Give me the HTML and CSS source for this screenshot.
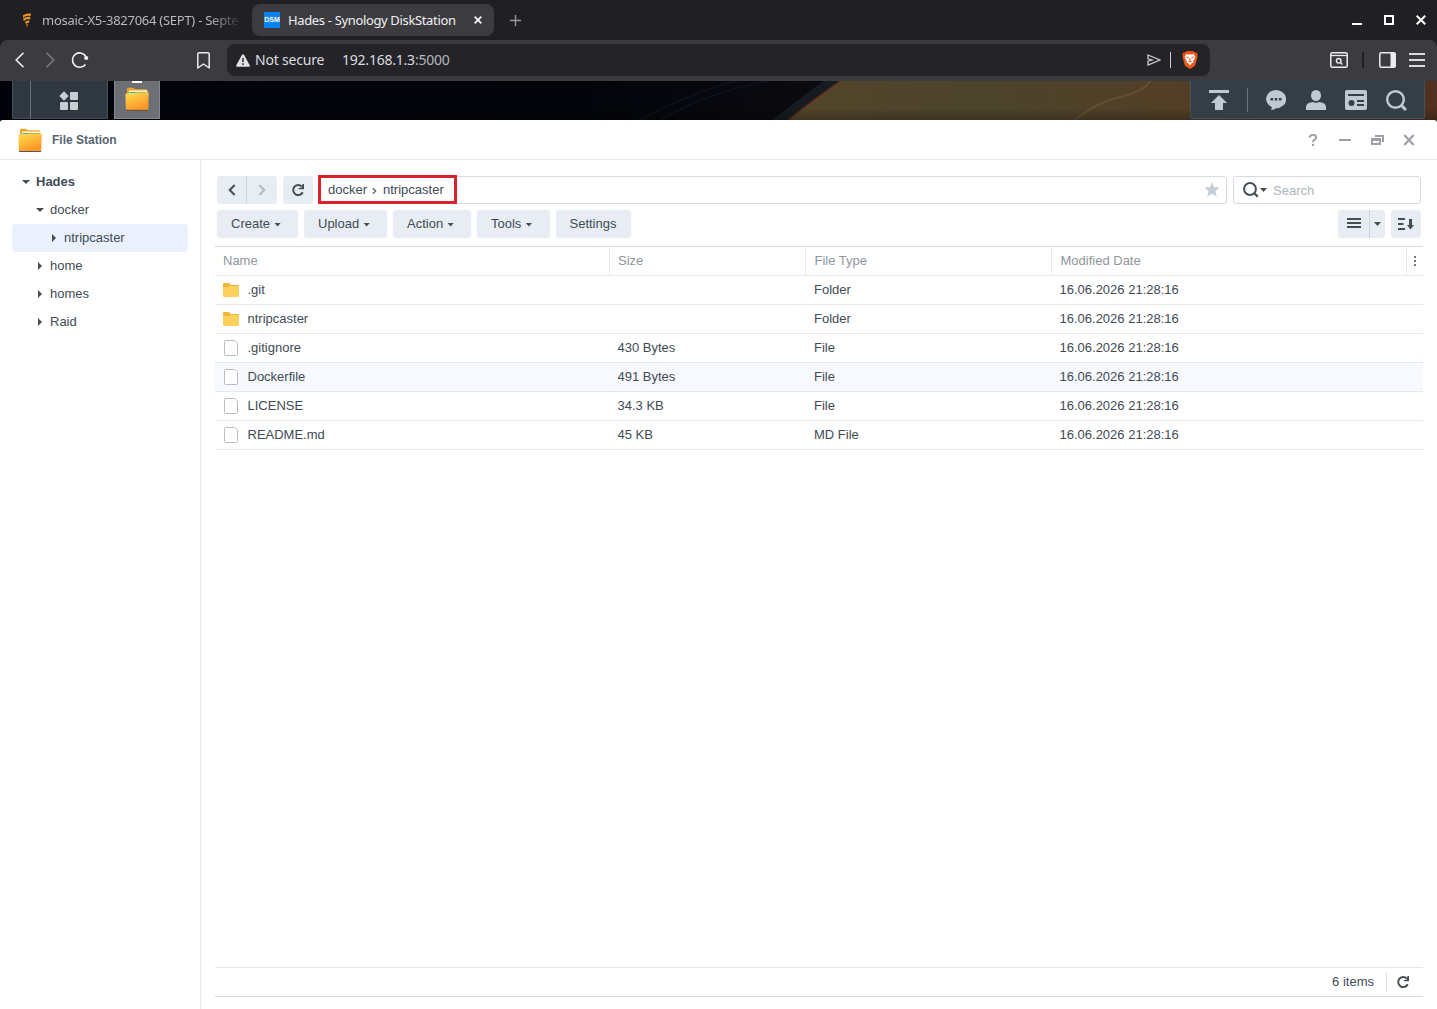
FILE: index.html
```html
<!DOCTYPE html>
<html lang="en">
<head>
<meta charset="utf-8">
<title>Hades - Synology DiskStation</title>
<link rel="stylesheet" href="styles.css">
</head>
<body>
<svg class="defs" width="0" height="0" aria-hidden="true">
  <defs>
    <linearGradient id="gold" x1="0" y1="0" x2="0.5" y2="1"><stop offset="0" stop-color="#ffe04f"/><stop offset="1" stop-color="#fd9527"/></linearGradient>
    <symbol id="app-folder" viewBox="0 0 24 24">
      <path d="M2 8V2.2Q2 .8 3.2.8H8l2 1.400h12v8H2z" fill="#efa52b"/>
      <path d="M4 3.5h18.5V9H4z" fill="#fff5c9"/><path d="M4.5 5h17v1.2h-17z" fill="#48aa8d"/>
      <path d="M1 22.5h22V24H1z" fill="#695345"/>
      <path d="M.5 7.3q0-.8.8-.8h7.2l1.7-1h12.5q1 0 1 1l-.4 15.3q0 1-1 1H1.8q-1 0-1-1z" fill="url(#gold)"/>
    </symbol>
    <symbol id="folder" viewBox="0 0 16 14"><path d="M0 1q0-1 1-1h5l2 2h8v5H0z" fill="#f3b63c"/><path d="M0 4h6l1.5-1H16v10q0 1-1 1H1q-1 0-1-1z" fill="#ffd05c"/></symbol>
    <symbol id="file" viewBox="0 0 14 16"><path d="M1.500.5h8.700q.6 0 1 .4l1.900 1.900q.4.400.4 1v10.700q0 1-1 1h-11q-1 0-1-1v-13q0-1 1-1z" fill="#fff" stroke="#b9bcc0"/></symbol>
    <symbol id="reload" viewBox="0 0 14 14"><path d="M11.700 9.200A5 5 0 1 1 10.700 3.500" fill="none" stroke="#464e55" stroke-width="2"/><path d="M13 1v5.200H7.800V5l2.700-.3L11.500 1z" fill="#464e55"/></symbol>
  </defs>
</svg>

<header class="tabs">
  <div class="tab tab-idle">
    <svg class="fav" width="10" height="14" viewBox="0 0 10 14"><path d="M1 2.200Q4 0 9 .5L8.600 3Q4 2 1 5zM1 6q3-2.800 7.500-2L8 6.500Q5 5 2 8zM3 9q2-2 4.500-1.500L6.800 10Q5 9.500 4 11zM4 11.700l2-.8L5 14z" fill="#ee9622"/></svg>
    <span class="tab-label">mosaic-X5-3827064 (SEPT) - Septe</span>
  </div>
  <div class="tab tab-active">
    <span class="dsm">DSM</span>
    <span class="tab-label">Hades - Synology DiskStation</span>
    <svg class="tab-close" width="8" height="8" viewBox="0 0 8 8"><path d="M.7.7l6.600 6.600M7.300.7L.7 7.300" stroke="#f5f5f5" stroke-width="1.800"/></svg>
  </div>
  <svg class="plus" width="11" height="11" viewBox="0 0 11 11"><path d="M5.500 0v11M0 5.500h11" stroke="#9a9a9d" stroke-width="1.400"/></svg>
  <div class="win-buttons">
    <svg width="10" height="12" viewBox="0 0 10 12"><path d="M0 10h10" stroke="#fff" stroke-width="2"/></svg>
    <svg width="10" height="12" viewBox="0 0 10 12"><path d="M1 2h8v8H1z" fill="none" stroke="#fff" stroke-width="2"/></svg>
    <svg width="10" height="12" viewBox="0 0 10 12"><path d="M.7 1.700l8.600 8.600M9.300 1.700L.7 10.300" stroke="#fff" stroke-width="2"/></svg>
  </div>
</header>

<nav class="browser-bar">
  <svg class="b-back" width="10" height="16" viewBox="0 0 10 16"><path d="M8.500.8L1.200 8l7.300 7.200" fill="none" stroke="#f1f1f3" stroke-width="1.600"/></svg>
  <svg class="b-fwd" width="10" height="16" viewBox="0 0 10 16"><path d="M1.500.8L8.800 8l-7.300 7.200" fill="none" stroke="#7f7f84" stroke-width="1.400"/></svg>
  <svg class="b-reload" width="18" height="18" viewBox="0 0 18 18"><path d="M14.500 13.400A7.200 7.200 0 1 1 15.200 6" fill="none" stroke="#f1f1f3" stroke-width="1.600"/><circle cx="15.200" cy="7" r="2.100" fill="#f1f1f3"/></svg>
  <svg class="b-mark" width="13" height="17" viewBox="0 0 13 17"><path d="M.8 16V2Q.8.8 2 .8h9Q12.200.8 12.200 2v14l-5.700-4z" fill="none" stroke="#ececef" stroke-width="1.500" stroke-linejoin="round"/></svg>
  <div class="address">
    <svg width="14" height="13" viewBox="0 0 14 13"><path d="M6 .8q1-1.300 2 0l5.700 10.500q.5 1.200-.8 1.400H1.100Q-.2 12.500.3 11.300z" fill="#e2e2e5"/><path d="M7 4v4M7 9.300v1.700" stroke="#29292d" stroke-width="1.500"/></svg>
    <span class="insecure">Not secure</span>
    <span class="url">192.168.1.3<span class="port">:5000</span></span>
    <svg class="send" width="14" height="12" viewBox="0 0 14 12"><path d="M1 1l12 5L1 11V7.200L5 6 1 4.800z" fill="none" stroke="#d0d0d4" stroke-width="1.300"/></svg>
    <i class="addr-sep"></i>
    <svg width="16" height="18" viewBox="0 0 16 18"><path d="M4.500 0h7l1.400 1.500 1.500-.1 1.300 2-.5 1.300.3 1-2 7.800q-.3 1.200-1.500 2L8 18l-4-2.500q-1.200-.8-1.500-2L.5 5.700l.3-1-.5-1.300 1.300-2 1.500.1z" fill="#ec5518"/><path d="M4.500 3l2 .5h3l2-.5 1.800 2.400-.6 2.500-1.700 2 .7 1.600-2 .7L8 14.500 6.300 12.200l-2-.7.7-1.600-1.700-2-.6-2.500z" fill="#fff"/><path d="M4.200 6l2.400.7M11.800 6l-2.400.7M8 7v3M6.300 10.700h3.400" stroke="#ec5518" stroke-width="1"/></svg>
  </div>
  <div class="b-right">
    <svg width="18" height="16" viewBox="0 0 18 16"><rect x=".8" y=".8" width="16.400" height="14.400" rx="1.500" fill="none" stroke="#ececef" stroke-width="1.500"/><path d="M1 3.500h16" stroke="#ececef" stroke-width="1.300"/><circle cx="8.700" cy="8.800" r="2.300" fill="none" stroke="#ececef" stroke-width="1.400"/><path d="M10.400 10.500l2 2" stroke="#ececef" stroke-width="1.400"/></svg>
    <i class="b-sep"></i>
    <svg width="17" height="16" viewBox="0 0 17 16"><rect x=".8" y=".8" width="15.400" height="14.400" rx="1.500" fill="none" stroke="#ececef" stroke-width="1.500"/><path d="M11.500 1h5v14h-5z" fill="#ececef"/></svg>
    <svg width="16" height="14" viewBox="0 0 16 14"><path d="M0 1h16M0 7h16M0 13h16" stroke="#dcdcdf" stroke-width="1.800"/></svg>
  </div>
</nav>

<div class="taskbar">
  <svg class="wallpaper" width="1437" height="39" viewBox="0 0 1437 39">
    <defs>
      <linearGradient id="night"><stop offset="0" stop-color="#02030a"/><stop offset=".7" stop-color="#03050b"/><stop offset="1" stop-color="#0b0b10"/></linearGradient>
      <linearGradient id="sand"><stop offset="0" stop-color="#53452a"/><stop offset=".3" stop-color="#4c442b"/><stop offset=".6" stop-color="#523f26"/><stop offset="1" stop-color="#51301e"/></linearGradient>
      <linearGradient id="shade" x2="0" y2="1"><stop offset="0" stop-color="#000" stop-opacity="0"/><stop offset=".7" stop-color="#000" stop-opacity="0"/><stop offset="1" stop-color="#000" stop-opacity=".25"/></linearGradient>
    </defs>
    <path d="M0 0h840v39H0z" fill="url(#night)"/>
    <path d="M640 39Q690 12 736 0M660 39Q710 10 770 0" fill="none" stroke="#16202a" stroke-width="1.500" opacity=".5"/>
    <path d="M823 0h17l-51 39h-17z" fill="#151b20"/>
    <path d="M840 0h597v39H788Q812 20 840 0z" fill="url(#sand)"/>
    <path d="M840 0Q812 20 788 39" fill="none" stroke="#5d281c" stroke-width="1.500"/>
    <path d="M1075 39Q1095 22 1120 16T1150 0" fill="none" stroke="#715a39" stroke-width="2" opacity=".6"/>
    <path d="M0 0h1437v39H0z" fill="url(#shade)"/>
  </svg>
  <div class="tray tray-left">
    <svg width="20" height="20" viewBox="0 0 20 20" fill="#c9ced4"><path d="M5 .3L9.700 5 5 9.700.3 5z"/><rect x="11" y="1" width="8" height="8" rx="1"/><rect x="1" y="11" width="8" height="8" rx="1"/><rect x="11" y="11" width="8" height="8" rx="1"/></svg>
  </div>
  <div class="task-app"><svg width="24" height="24"><use href="#app-folder"/></svg></div>
  <div class="tray tray-right">
    <svg width="20" height="20" viewBox="0 0 20 20" fill="#c1c9d1"><path d="M0 0h20v3H0zM10 5l8 8h-4v7H6v-7H2z"/></svg>
    <i></i>
    <svg width="20" height="20" viewBox="0 0 20 20"><path d="M10 0a10 9 0 0 1 0 18.300Q8.500 20 5 20l1-2.800A10 9 0 0 1 10 0z" fill="#c1c9d1"/><path d="M4.500 8h2.600v2.600H4.500zM8.700 8h2.600v2.600H8.700zM12.900 8h2.600v2.600h-2.600z" fill="#354049"/></svg>
    <svg width="20" height="20" viewBox="0 0 20 20" fill="#c1c9d1"><ellipse cx="10" cy="5.500" rx="5" ry="5.500"/><path d="M0 20v-3q0-4 6.500-5 3.500 1.500 7 0Q20 13 20 17v3z"/></svg>
    <svg width="22" height="20" viewBox="0 0 22 20"><rect width="22" height="20" rx="2" fill="#c1c9d1"/><path d="M3 5h16M12 11h7M12 15h7" stroke="#354049" stroke-width="2"/><circle cx="6.500" cy="13" r="3" fill="#354049"/></svg>
    <svg width="21" height="21" viewBox="0 0 21 21"><circle cx="9.500" cy="9.500" r="8.300" fill="none" stroke="#c1c9d1" stroke-width="2.400"/><path d="M15 15l5 5" stroke="#c1c9d1" stroke-width="3"/></svg>
  </div>
</div>

<section class="window">
  <header class="titlebar">
    <svg width="24" height="24"><use href="#app-folder"/></svg>
    <h1>File Station</h1>
    <div class="title-buttons">
      <svg width="12" height="12" viewBox="0 0 12 12"><path d="M2.700 3.600Q2.900.9 6 .9q3.100 0 3.100 2.500 0 1.500-1.700 2.500Q6 6.700 6 8.300" fill="none" stroke="#9ea0a5" stroke-width="1.900"/><path d="M5 10h2v2H5z" fill="#9ea0a5"/></svg>
      <svg width="12" height="12" viewBox="0 0 12 12"><path d="M0 6h12" stroke="#9ea0a5" stroke-width="2"/></svg>
      <svg width="13" height="12" viewBox="0 0 13 12"><path d="M4 1h9v7h-2V3H4zM0 4h10v7H0zM2 7v2h6V7z" fill="#9ea0a5" fill-rule="evenodd"/></svg>
      <svg width="12" height="12" viewBox="0 0 12 12"><path d="M1.300 1l9.400 10M10.700 1L1.300 11" stroke="#9ea0a5" stroke-width="2.200"/></svg>
    </div>
  </header>
  <div class="body">
    <aside class="tree">
      <div class="node root"><i class="down"></i>Hades</div>
      <div class="node l1"><i class="down"></i>docker</div>
      <div class="node l2 selected"><i class="right"></i>ntripcaster</div>
      <div class="node l1"><i class="right"></i>home</div>
      <div class="node l1"><i class="right"></i>homes</div>
      <div class="node l1"><i class="right"></i>Raid</div>
    </aside>
    <main class="main">
      <div class="path-row">
        <div class="split">
          <button><svg width="8" height="12" viewBox="0 0 8 12"><path d="M6.700 1L1.700 6l5 5" fill="none" stroke="#464e55" stroke-width="2"/></svg></button>
          <button><svg width="8" height="12" viewBox="0 0 8 12"><path d="M1.300 1l5 5-5 5" fill="none" stroke="#b4bac2" stroke-width="2"/></svg></button>
        </div>
        <button class="refresh"><svg width="14" height="14"><use href="#reload"/></svg></button>
        <div class="path">
          <span>docker</span>
          <svg width="5" height="8" viewBox="0 0 5 8"><path d="M.8 1.300L3.700 4 .8 6.700" fill="none" stroke="#5a646d" stroke-width="1.200"/></svg>
          <span>ntripcaster</span>
          <svg class="star" width="16" height="15" viewBox="0 0 16 15"><path d="M8 0l2.100 5.200 5.500.4-4.200 3.600 1.400 5.400L8 11.700l-4.800 2.900 1.400-5.400L.4 5.600l5.500-.4z" fill="#c5ced8"/></svg>
          <div class="highlight"></div>
        </div>
        <div class="search">
          <svg width="16" height="16" viewBox="0 0 16 16"><circle cx="7" cy="7" r="5.900" fill="none" stroke="#464e55" stroke-width="2"/><path d="M10.800 10.800l4 4" stroke="#464e55" stroke-width="2.300"/></svg>
          <i class="caret"></i><span>Search</span>
        </div>
      </div>
      <div class="action-row">
        <button class="menu w81">Create<i class="caret"></i></button>
        <button class="menu w83">Upload<i class="caret"></i></button>
        <button class="menu w78">Action<i class="caret"></i></button>
        <button class="menu w73">Tools<i class="caret"></i></button>
        <button class="w75">Settings</button>
        <div class="split view">
          <button><svg width="14" height="10" viewBox="0 0 14 10"><path d="M0 1h14M0 5h14M0 9h14" stroke="#464e55" stroke-width="1.800"/></svg></button>
          <button class="w15"><i class="caret"></i></button>
        </div>
        <button class="sort"><svg width="16" height="12" viewBox="0 0 16 12"><path d="M0 1h7M0 6h5.500M0 11h7" stroke="#464e55" stroke-width="1.900"/><path d="M11 1h3v6h2l-3.500 4.500L9 7h2z" fill="#464e55"/></svg></button>
      </div>
      <div class="grid">
        <div class="row head"><span>Name</span><span>Size</span><span>File Type</span><span>Modified Date</span><span class="more"><svg width="2" height="10" viewBox="0 0 2 10"><path d="M0 0h2v2H0zM0 4h2v2H0zM0 8h2v2H0z" fill="#70777e"/></svg></span></div>
        <div class="row"><span><svg width="16" height="14"><use href="#folder"/></svg>.git</span><span></span><span>Folder</span><span>16.06.2026 21:28:16</span></div>
        <div class="row"><span><svg width="16" height="14"><use href="#folder"/></svg>ntripcaster</span><span></span><span>Folder</span><span>16.06.2026 21:28:16</span></div>
        <div class="row"><span><svg class="doc" width="14" height="16"><use href="#file"/></svg>.gitignore</span><span>430 Bytes</span><span>File</span><span>16.06.2026 21:28:16</span></div>
        <div class="row hover"><span><svg class="doc" width="14" height="16"><use href="#file"/></svg>Dockerfile</span><span>491 Bytes</span><span>File</span><span>16.06.2026 21:28:16</span></div>
        <div class="row"><span><svg class="doc" width="14" height="16"><use href="#file"/></svg>LICENSE</span><span>34.3 KB</span><span>File</span><span>16.06.2026 21:28:16</span></div>
        <div class="row"><span><svg class="doc" width="14" height="16"><use href="#file"/></svg>README.md</span><span>45 KB</span><span>MD File</span><span>16.06.2026 21:28:16</span></div>
      </div>
      <footer class="status"><span>6 items</span><i></i><svg width="14" height="14"><use href="#reload"/></svg></footer>
    </main>
  </div>
</section>
</body>
</html>
```
FILE: styles.css
```css
* { box-sizing: border-box; }
body {
  margin: 0;
  height: 1009px;
  display: flex;
  flex-direction: column;
  overflow: hidden;
  background: #1f1f24;
  color: #414b55;
  font: 13px/20px "Liberation Sans", Arial, sans-serif;
}
svg { display: block; flex: none; }
.defs { position: absolute; }
button {
  margin: 0; padding: 0; border: 0;
  display: flex; align-items: center; justify-content: center;
  height: 28px;
  background: #e8edf4;
  border-radius: 3px;
  color: #414b55;
  font: inherit;
}

/* Browser tab strip */
.tabs {
  flex: none; height: 40px;
  display: flex; align-items: center;
  color: #f0f0f2;
  font-family: "Noto Sans", sans-serif;
}
.tab { height: 32px; display: flex; align-items: center; white-space: nowrap; }
.tab-idle { width: 252px; padding-left: 22px; color: #b9b9bd; }
.tab-idle .tab-label {
  width: 200px; margin-left: 10px; overflow: hidden; letter-spacing: -.26px;
  -webkit-mask-image: linear-gradient(90deg, #000 168px, transparent);
  mask-image: linear-gradient(90deg, #000 168px, transparent);
}
.tab-active { width: 242px; padding-left: 12px; border-radius: 8px; background: #3c3c40; }
.tab-active .tab-label { width: 174px; margin-left: 8px; letter-spacing: -.35px; }
.dsm {
  width: 16px; height: 16px; border-radius: 1px;
  background: #0b84ee; color: #fff;
  font: bold 7px/16px "Liberation Sans", sans-serif; text-align: center;
}
.tab-close { margin-left: 12px; }
.plus { margin-left: 16px; }
.win-buttons { margin-left: auto; margin-right: 11px; display: flex; gap: 22px; }

/* Browser toolbar */
.browser-bar {
  flex: none; height: 41px; padding: 0 12px 1px 15px;
  display: flex; align-items: center;
  background: #3b3b40;
  border-radius: 8px 8px 0 0;
  font: 14px/20px "Noto Sans", sans-serif;
}
.b-fwd { margin-left: 20px; }
.b-reload { margin-left: 16px; }
.b-mark { margin-left: 108px; }
.address {
  width: 983px; height: 32px; margin-left: 17px; padding: 0 12px 0 9px;
  display: flex; align-items: center;
  background: #242428; border-radius: 8px; color: #dcdce0;
}
.insecure { width: 87px; margin-left: 5px; letter-spacing: -.2px; }
.url { letter-spacing: -.22px; }
.port { color: #b6b6bb; }
.send { margin-left: auto; }
.addr-sep { width: 1px; height: 16px; margin: 0 11px 0 9px; background: #d0d0d4; }
.b-right { margin-left: auto; display: flex; align-items: center; }
.b-sep { width: 2px; height: 16px; margin: 0 15px 0 14px; background: #202024; }
.b-right svg:last-child { margin-left: 13px; }

/* Desktop taskbar */
.taskbar { flex: none; position: relative; height: 39px; padding: 0 12px; display: flex; }
.wallpaper { position: absolute; inset: 0; }
.tray, .task-app { position: relative; height: 38px; display: flex; align-items: center; }
.tray { background: #2f3841; border: 1px solid #45505a; border-top: 0; border-radius: 0 0 2px 2px; }
.tray-left { width: 96px; padding: 2px 0 0 46px; }
.tray-left::before { content: ""; position: absolute; left: 17px; top: 0; width: 1px; height: 37px; background: #66717b; }
.task-app { width: 46px; margin-left: 6px; padding: 0 0 1px 10px; background: #6c7075; border: 1px solid #85898d; border-top: 0; }
.task-app::before { content: ""; position: absolute; left: 17px; top: 0; width: 10px; height: 2px; background: #fff; }
.tray-right { width: 235px; margin-left: auto; padding: 1px 0 0 18px; background: #343e47; }
.tray-right i { width: 1px; height: 24px; margin: 0 18px; background: #6a747d; }
.tray-right svg + svg { margin-left: 20px; }
.tray-right svg:nth-last-child(-n+2) { margin-left: 19px; }

/* File Station window */
.window { flex: 1; min-height: 0; display: flex; flex-direction: column; background: #fff; border-radius: 3px 3px 0 0; }
.titlebar { height: 40px; padding: 0 22px 0 18px; display: flex; align-items: center; border-bottom: 1px solid #e3e8ec; }
h1 { margin: 0 0 0 10px; font-size: 12px; line-height: 20px; color: #576470; }
.title-buttons { margin-left: auto; display: flex; gap: 20px; }
.title-buttons svg:last-child { margin-left: -1px; }
.body { flex: 1; min-height: 0; display: flex; }
.tree { width: 201px; padding: 8px 12px; border-right: 1px solid #e3e8ec; }
.node { height: 28px; display: flex; align-items: center; border-radius: 4px; }
.root { padding-left: 10px; font-weight: bold; }
.l1 { padding-left: 24px; }
.l2 { padding-left: 38px; }
.selected { background: #eaf1fd; }
.down { width: 8px; height: 4px; margin-right: 6px; background: #464e55; clip-path: polygon(0 0, 100% 0, 50% 100%); }
.right { width: 4px; height: 8px; margin: 0 8px 0 2px; background: #464e55; clip-path: polygon(0 0, 100% 50%, 0 100%); }
.main { flex: 1; padding: 16px 14px 12px; display: flex; flex-direction: column; }
.path-row, .action-row { display: flex; margin: 0 2px; }
.split { display: flex; }
.split button:first-child { width: 30px; border-right: 1px solid #ccd4dc; border-radius: 3px 0 0 3px; }
.split button:last-child { width: 30px; border-radius: 0 3px 3px 0; }
.refresh { width: 30px; margin-left: 6px; }
.path {
  position: relative; flex: 1; height: 28px; margin-left: 6px; padding: 0 6px 0 8px;
  display: flex; align-items: center;
  border: 1px solid #d3dce4; border-radius: 3px;
}
.path svg { margin: 1px 6px 0 5px; }
.path .star { margin: 0 0 1px auto; }
.highlight { position: absolute; left: -2px; top: -2px; width: 139px; height: 29px; border: 3px solid #d8232a; }
.search { width: 188px; height: 28px; margin-left: 6px; padding-left: 9px; display: flex; align-items: center; border: 1px solid #d3dce4; border-radius: 3px; color: #acb4bc; }
.search span { padding-top: 2px; }
.caret { width: 7px; height: 4px; margin-left: 4px; margin-top: 1px; background: #464e55; clip-path: polygon(0 0, 100% 0, 50% 100%); }
.search .caret { margin: 0 6px 0 1px; }
.action-row { margin-top: 6px; gap: 6px; }
.menu { justify-content: flex-start; padding-left: 14px; }
.w81 { width: 81px; } .w83 { width: 83px; } .w78 { width: 78px; } .w73 { width: 73px; } .w75 { width: 75px; }
.w75 { padding-right: 1px; }
.view { margin-left: auto; }
.split.view button:first-child { width: 32px; padding-bottom: 2px; }
.split.view .w15 { width: 15px; }
.w15 .caret { margin: 0; }
.sort { width: 30px; }
.grid { margin-top: 8px; border-top: 1px solid #d3dce4; }
.row { height: 29px; display: grid; grid-template-columns: 395px 196px 246px 355px 16px; border-bottom: 1px solid #e4e9ef; }
.row > span { padding-left: 8px; display: flex; align-items: center; }
.row > span:nth-child(2) { padding-left: 7.500px; }
.row > span:nth-child(4) { padding-left: 7.500px; }
.row svg { margin-right: 8.500px; }
.row .doc { margin: 0 9.500px 0 1px; }
.head { color: #8e969d; }
.head > span { border-right: 1px solid #e4e9ef; }
.head > span:nth-child(2) { padding-left: 8px; }
.head > span:nth-child(3), .head > span:nth-child(4) { padding-left: 8.500px; }
.head .more { padding: 0; justify-content: center; border: 0; }
.head svg { margin: 0; }
.hover { background: #f7f9fe; }
.status { height: 30px; margin-top: auto; padding-right: 13px; display: flex; align-items: center; justify-content: flex-end; border-top: 1px solid #e1e7ec; border-bottom: 1px solid #d3dce4; }
.status i { width: 1px; height: 20px; margin: 0 9px 0 12px; background: #dce3e9; }
```
